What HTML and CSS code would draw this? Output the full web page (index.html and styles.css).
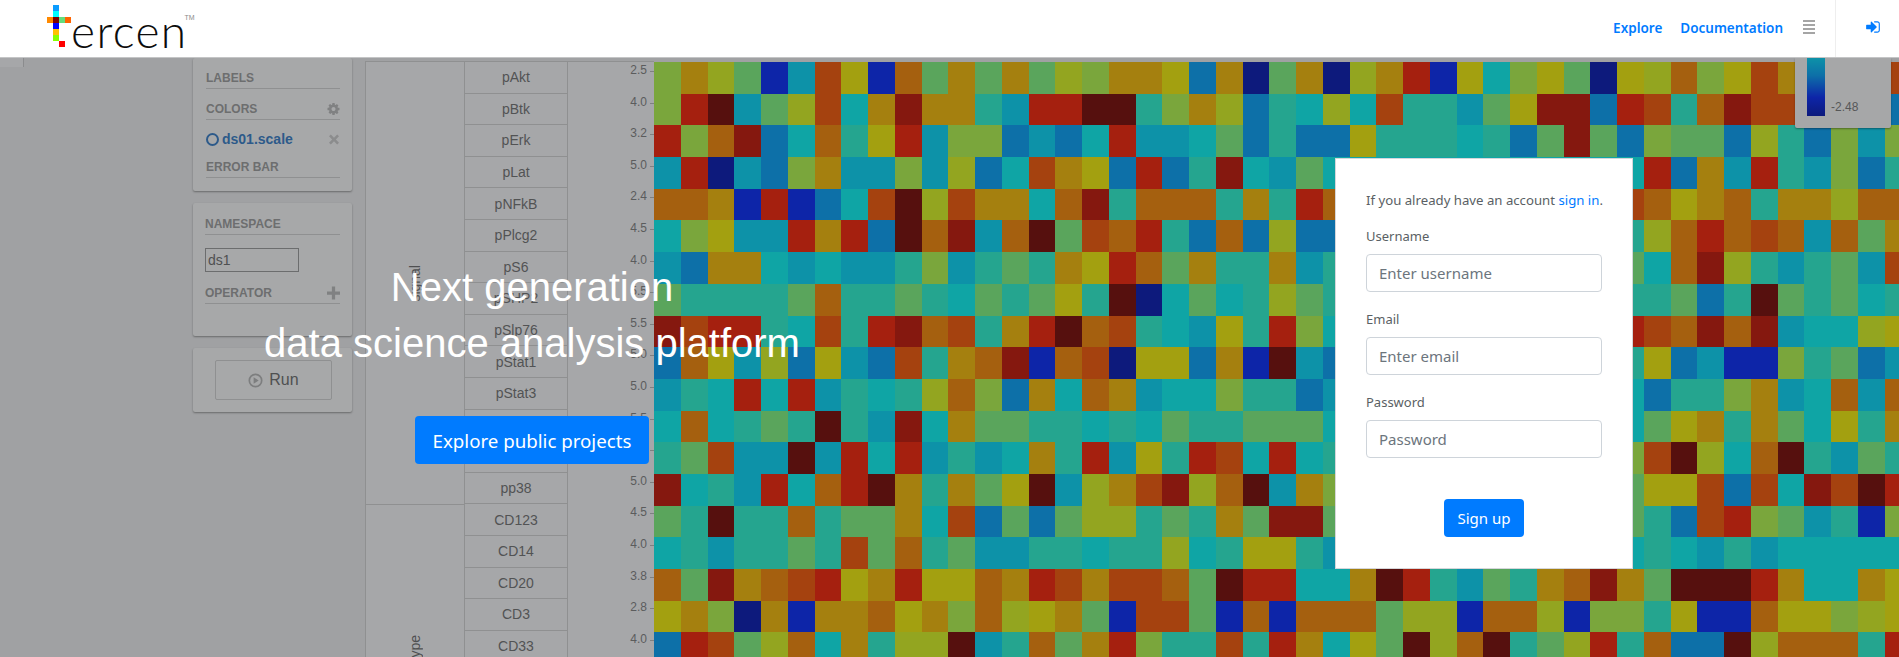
FILE: index.html
```html
<!DOCTYPE html>
<html lang="en">
<head>
<meta charset="utf-8">
<title>Tercen</title>
<link rel="stylesheet" href="styles.css">
</head>
<body>
<header class="nav">
  <a class="logo" href="#">
    <span class="logo-mark">
      <i class="px px-a"></i><i class="px px-b"></i>
      <span class="px-row"><i class="px px-c"></i><i class="px px-d"></i><i class="px px-e"></i><i class="px px-f"></i></span>
      <i class="px px-g"></i><i class="px px-h"></i><i class="px px-i"></i><i class="px px-j"></i>
    </span>
    <span class="logo-word">ercen</span><sup class="logo-tm">TM</sup>
  </a>
  <nav class="nav-links">
    <a href="#">Explore</a>
    <a href="#">Documentation</a>
    <span class="burger"><i></i><i></i><i></i><i></i></span>
    <span class="nav-sep"></span>
    <svg class="signin" viewBox="0 0 1536 1792"><path d="M1184 896q0 26-19 45l-544 544q-19 19-45 19t-45-19-19-45v-288h-448q-26 0-45-19t-19-45v-384q0-26 19-45t45-19h448v-288q0-26 19-45t45-19 45 19l544 544q19 19 19 45zm352-352v704q0 119-84.5 203.5t-203.5 84.5h-320q-13 0-22.5-9.5t-9.5-22.5q0-4-1-20t-.5-26.5 3-23.5 10-19.5 20.5-6.5h320q66 0 113-47t47-113v-704q0-66-47-113t-113-47h-312l-11.5-1-11.5-3-8-5.5-7-9-2-13.5q0-4-1-20t-.5-26.5 3-23.5 10-19.5 20.5-6.5h320q119 0 203.5 84.5t84.5 203.5z"/></svg>
  </nav>
</header>

<main class="app">
  <div class="gutter"><div class="gutter-box"></div></div>

  <aside class="cards">
    <section class="card card-top">
      <div class="field"><span>LABELS</span></div>
      <div class="field"><span>COLORS</span>
        <svg class="ico" viewBox="0 0 1536 1792"><path d="M1024 896q0-106-75-181t-181-75-181 75-75 181 75 181 181 75 181-75 75-181zm512-109v222q0 12-8 23t-20 13l-185 28q-19 54-39 91 35 50 107 138 10 12 10 25t-9 23q-27 37-99 108t-94 71q-12 0-26-9l-138-108q-44 23-91 38-16 136-29 186-7 28-36 28h-222q-14 0-24.5-8.5t-11.5-21.5l-28-184q-49-16-90-37l-141 107q-10 9-25 9-14 0-25-11-126-114-165-168-7-10-7-23 0-12 8-23 15-21 51-66.5t54-70.5q-27-50-41-99l-183-27q-13-2-21-12.5t-8-23.5v-222q0-12 8-23t19-13l186-28q14-46 39-92-40-57-107-138-10-12-10-24 0-10 9-23 26-36 98.5-107.5t94.5-71.5q13 0 26 10l138 107q44-23 91-38 16-136 29-186 7-28 36-28h222q14 0 24.5 8.5t11.5 21.5l28 184q49 16 90 37l142-107q9-9 24-9 13 0 25 10 129 119 165 170 7 8 7 22 0 12-8 23-15 21-51 66.5t-54 70.5q26 50 41 98l183 28q13 2 21 12.5t8 23.5z"/></svg>
      </div>
      <div class="chip"><i class="chip-dot"></i><span class="chip-name">ds01.scale</span>
        <svg class="ico ico-x" viewBox="0 0 12 12"><path d="M2.2 0 6 3.8 9.8 0 12 2.2 8.2 6 12 9.8 9.8 12 6 8.2 2.2 12 0 9.8 3.8 6 0 2.2z"/></svg>
      </div>
      <div class="field field-tight"><span>ERROR BAR</span></div>
    </section>

    <section class="card card-ns">
      <div class="field"><span>NAMESPACE</span></div>
      <input class="ns-input" type="text" value="ds1">
      <div class="field"><span>OPERATOR</span>
        <svg class="ico" viewBox="0 0 12 12"><path d="M4.5 0h3v4.5H12v3H7.5V12h-3V7.5H0v-3h4.5z"/></svg>
      </div>
    </section>

    <section class="card card-run">
      <button class="run" type="button">
        <svg class="run-ico" viewBox="0 0 16 16"><circle cx="8" cy="8" r="6.6" fill="none" stroke="#7d7e7f" stroke-width="1.8"/><path d="M6 4.6 11.4 8 6 11.4z" fill="#7d7e7f"/></svg>
        Run
      </button>
    </section>
  </aside>

  <section class="facets">
    <div class="groups">
      <div class="group group-a"><span class="vtext">signal</span></div>
      <div class="group group-b"><span class="vtext">Cell type</span></div>
    </div>
    <div class="rows">
      <div class="row">pAkt</div><div class="row">pBtk</div><div class="row">pErk</div><div class="row">pLat</div>
      <div class="row">pNFkB</div><div class="row">pPlcg2</div><div class="row">pS6</div><div class="row">pSHP2</div>
      <div class="row">pSlp76</div><div class="row">pStat1</div><div class="row">pStat3</div><div class="row">pStat5</div>
      <div class="row">pZap70</div><div class="row">pp38</div><div class="row">CD123</div><div class="row">CD14</div>
      <div class="row">CD20</div><div class="row">CD3</div><div class="row">CD33</div>
    </div>
    <div class="scale">
      <div class="scale-title"><span class="vtext">ds01.scale</span></div>
      <div class="scale-values">
        <div class="val">2.5</div><div class="val">4.0</div><div class="val">3.2</div><div class="val">5.0</div>
        <div class="val">2.4</div><div class="val">4.5</div><div class="val">4.0</div><div class="val">5.5</div>
        <div class="val">5.5</div><div class="val">5.0</div><div class="val">5.0</div><div class="val">5.5</div>
        <div class="val">5.0</div><div class="val">5.0</div><div class="val">4.5</div><div class="val">4.0</div>
        <div class="val">3.8</div><div class="val">2.8</div><div class="val">4.0</div>
      </div>
    </div>
  </section>

  <div class="heat" id="heat"></div>

  <div class="legend">
    <div class="legend-bar"></div>
    <span class="legend-min">-2.48</span>
  </div>

  <div class="hero">
    <h1 class="hero-title">Next generation<br>data science analysis platform</h1>
    <a class="hero-btn" href="#">Explore public projects</a>
  </div>

  <form class="signup">
    <p class="signup-note">If you already have an account <a href="#">sign in</a>.</p>
    <label class="lbl lbl-first" for="u">Username</label>
    <input class="inp" id="u" type="text" placeholder="Enter username">
    <label class="lbl" for="e">Email</label>
    <input class="inp" id="e" type="text" placeholder="Enter email">
    <label class="lbl" for="p">Password</label>
    <input class="inp" id="p" type="password" placeholder="Password">
    <button class="signup-btn" type="button">Sign up</button>
  </form>
</main>
<script src="heat.js"></script>
</body>
</html>
```
FILE: styles.css
```css
* { box-sizing: border-box; }
html, body { margin: 0; height: 100%; overflow: hidden; }
body {
  font-family: "Liberation Sans", Arial, sans-serif;
  background: #a0a1a3;
  color: #555;
  display: flex;
  flex-direction: column;
}
a { text-decoration: none; }

/* Top bar */
.nav {
  height: 58px;
  flex: none;
  background: #fff;
  border-bottom: 1px solid #c4c5c6;
  display: flex;
  justify-content: space-between;
  position: relative;
  z-index: 5;
}
.logo { display: flex; align-items: flex-start; margin-left: 47px; color: #111; }
.logo-mark { width: 24px; height: 42px; margin-top: 5px; display: flex; flex-direction: column; align-items: flex-start; }
.px { display: block; width: 6px; height: 6px; margin-left: 6px; flex: none; }
.px-row { display: flex; }
.px-row .px { margin-left: 0; }
.px-a { background: #0a9cff; }
.px-b { background: #00ffff; }
.px-c { background: #ff8a00; }
.px-d { background: #7d0000; }
.px-e { background: #63dd7c; }
.px-f { background: #ff6400; }
.px-g { background: #0000ff; }
.px-h { background: #ffc000; }
.px-i { background: #88ff00; }
.px-j { background: #ff0000; margin-left: 12px; }
.logo-word {
  font-family: Lato, sans-serif;
  font-weight: 300;
  font-size: 46px;
  line-height: 46px;
  margin-left: 0;
  margin-top: 8px;
  letter-spacing: 1.4px;
  color: #0c0c0c;
}
.logo-tm { font-size: 7px; line-height: 8px; margin-top: 14px; margin-left: -3px; color: #8b8b8b; }
.nav-links {
  display: flex;
  align-items: center;
  font-family: "Noto Sans", sans-serif;
  font-weight: 600;
  font-size: 13.5px;
  padding-bottom: 1px;
  padding-right: 19px;
  height: 57px;
}
.nav-links a { color: #007bff; margin-right: 18px; }
.burger { display: flex; flex-direction: column; gap: 2px; width: 12px; margin-left: 2px; margin-top: -2px; }
.burger i { display: block; height: 2px; background: #a5a5a5; }
.nav-sep { width: 1px; height: 57px; background: #eee; margin-left: 20px; margin-right: 30px; margin-bottom: -1px; }
.signin { width: 14px; height: 16px; fill: #007bff; margin-top: -2px; }

/* App underneath the overlay */
.app {
  position: relative;
  flex: 1;
  min-height: 0;
  display: flex;
  align-items: flex-start;
  overflow: hidden;
}
.gutter { width: 193px; flex: none; }
.gutter-box { width: 24px; height: 9px; background: #a6a7a9; border-right: 1px solid #8b8c8e; }

.cards { width: 159px; flex: none; display: flex; flex-direction: column; gap: 12px; }
.card { background: #a7a8a9; border-radius: 2px; box-shadow: 0 1px 2px rgba(0, 0, 0, .35); padding: 0 12px 0 13px; }
.card-top { height: 133px; padding-top: 10px; }
.card-ns { height: 133px; padding: 11px 12px; }
.card-run { height: 64px; padding: 12px 20px 0 22px; }
.field {
  display: flex;
  justify-content: space-between;
  align-items: center;
  height: 21px;
  font-size: 12px;
  font-weight: 700;
  color: #6d6e6f;
  border-bottom: 1px solid #8f9091;
  margin-bottom: 10px;
}
.ico { width: 13px; height: 14px; fill: #808182; }
.ico-x { width: 10px; height: 11px; fill: #8b8c8d; margin-left: auto; margin-right: 1px; }
.chip { display: flex; align-items: center; height: 20px; margin: -1px 0 8px; }
.chip-dot { width: 13px; height: 13px; border: 2px solid #2d5a8a; border-radius: 50%; margin-right: 3px; }
.chip-name { font-size: 14px; font-weight: 700; color: #2d5a8a; }
.field-tight { margin-top: 0; }
.ns-input {
  display: block;
  width: 94px;
  height: 24px;
  padding: 0 2px;
  margin: 13px 0 11px;
  background: transparent;
  border: 1px solid #6c6d6e;
  border-radius: 0;
  font-family: inherit;
  font-size: 14px;
  color: #4f5051;
}
.run {
  width: 117px;
  height: 40px;
  background: transparent;
  border: 1px solid #8f9091;
  border-radius: 2px;
  font-family: inherit;
  font-size: 16px;
  color: #4f5051;
  display: flex;
  align-items: center;
  justify-content: center;
  gap: 6px;
}
.run-ico { width: 15px; height: 15px; }

.facets {
  width: 289px;
  margin-left: 13px;
  flex: none;
  display: flex;
  margin-top: 3px;
  background: #a6a7a9;
  border-top: 1px solid #8f9091;
  border-left: 1px solid #8f9091;
  height: 700px;
}
.groups { width: 99px; flex: none; border-right: 1px solid #8f9091; }
.group { display: flex; align-items: center; justify-content: center; color: #4f5051; }
.group-a { height: 443px; border-bottom: 1px solid #8f9091; }
.group-b { height: 315px; }
.vtext { writing-mode: vertical-rl; transform: rotate(180deg); font-size: 14px; color: #4f5051; white-space: nowrap; }
.rows { width: 103px; flex: none; border-right: 1px solid #8f9091; }
.row {
  height: 31.6px;
  border-bottom: 1px solid #8f9091;
  display: flex;
  align-items: center;
  justify-content: center;
  font-size: 14px;
  color: #525354;
}
.scale { flex: 1; display: flex; min-width: 0; }
.scale-title { width: 30px; padding-top: 332px; display: flex; justify-content: center; }
.scale-values { flex: 1; }
.val {
  height: 31.6px;
  display: flex;
  justify-content: flex-end;
  font-size: 12px;
  line-height: 16px;
  color: #5b5c5d;
}
.val::after { content: ""; width: 4px; height: 1px; margin: 9px 0 0 3px; background: #7f8081; }

.heat {
  flex: 1;
  min-width: 0;
  margin-top: 4px;
  display: grid;
  grid-template-columns: repeat(47, 26.76px);
  grid-auto-rows: 31.7px;
}
.c-N { background: #0d1a7c; }
.c-B { background: #0d25a8; }
.c-L { background: #0d70a8; }
.c-C { background: #0d92a8; }
.c-T { background: #0fa5a5; }
.c-G { background: #25a58f; }
.c-E { background: #5aa55c; }
.c-O { background: #7aa63c; }
.c-P { background: #93a520; }
.c-Y { background: #a3a010; }
.c-A { background: #a5800f; }
.c-R { background: #a5600f; }
.c-S { background: #a5420f; }
.c-D { background: #a5200f; }
.c-M { background: #85180f; }
.c-K { background: #56100e; }

.legend {
  position: absolute;
  top: 0;
  left: 1795px;
  width: 96px;
  height: 70px;
  background: #a6a7a8;
  box-shadow: 0 1px 2px rgba(0, 0, 0, .35);
  border-radius: 0 0 2px 2px;
  padding-left: 12px;
  display: flex;
}
.legend-bar { width: 18px; height: 58px; background: linear-gradient(#0d92a8 0%, #0d70a8 30%, #0d25a8 68%, #0d1a7c 100%); }
.legend-min { font-size: 12px; line-height: 14px; color: #565758; margin: 42px 0 0 6px; }

/* Overlay content */
.hero {
  position: absolute;
  left: 232px;
  top: 201px;
  width: 600px;
  display: flex;
  flex-direction: column;
  align-items: center;
  text-align: center;
}
.hero-title {
  margin: 0;
  font-weight: 400;
  font-size: 40px;
  line-height: 56px;
  color: #fff;
}
.hero-btn {
  margin-top: 45px;
  width: 234px;
  height: 48px;
  display: flex;
  align-items: center;
  justify-content: center;
  background: #007bff;
  border-radius: 4px;
  color: #fff;
  font-family: "Noto Sans", sans-serif;
  font-size: 18.7px;
}
.signup {
  position: absolute;
  left: 1335px;
  top: 100px;
  width: 298px;
  height: 411px;
  background: #fff;
  border: 1px solid #d5d6da;
  padding: 32px 30px 0;
  display: flex;
  flex-direction: column;
  font-family: "Noto Sans", sans-serif;
  font-size: 13px;
  color: #5a5f64;
}
.signup-note { margin: 0; line-height: 18px; white-space: nowrap; font-size: 13.2px; }
.signup-note a { color: #007bff; }
.lbl { line-height: 18px; margin-top: 18px; margin-bottom: 9px; display: block; }
.lbl-first { margin-top: 18px; }
.inp {
  height: 38px;
  width: 100%;
  padding: 0 12px;
  border: 1px solid #ced4da;
  border-radius: 4px;
  font-family: inherit;
  font-size: 15px;
  color: #495057;
  background: #fff;
}
.inp::placeholder { color: #6c757d; opacity: 1; }
.signup-btn {
  align-self: center;
  margin-top: 41px;
  width: 80px;
  height: 38px;
  border: 0;
  border-radius: 4px;
  background: #007bff;
  color: #fff;
  font-family: inherit;
  font-size: 15px;
}
```
FILE: heat.js
```js
var H = "TTTTTTTTTT";
var rows = [
  "OAPEBCSYBREAEAEPOAAYLANE" + "ANPADBYTOYENYPROYSATTTS",
  "ODKCEPSTAMAAGCDDKKGOAPLG" + "TPTSGGCEYMMLDSGRMSSTTTL",
  "DORMLTRGYDCOOLCLTDCCTELG" + "LLYGGGTGLEMELOEELPGLOCO",
  "CDNCLOACCOCPLTSAYLDLGMTC" + "ET" + H + "TDLACDGCOLG",
  "RRABDBLTSKPSAATRMGRRRGAG" + "DR" + H + "SRYARGAAPRR",
  "TOYCCDADLKRMCRKESRDGLRLP" + "LL" + H + "GPRDRSRCREA",
  "CLAATCTCCGOCGEGAYDREAGGA" + "CG" + H + "ETRMPGCGECS",
  "EGGGGERGGEGTEGEYGKNTETGP" + "EG" + H + "GGELGKEGETG",
  "MSDDGTSGDMRSGADKRSGTCYGD" + "OT" + H + "DSRMRMCTTPY",
  "LRYCPLYCLSGARMBRSNYYLABK" + "CL" + H + "GYLCBBOGELC",
  "CGTDTDCGTGPROLATRACTTOGG" + "LC" + H + "TLGGOACTRCR",
  "TRTGEGKGCMTAEEGGTGTEGGEE" + "ET" + H + "TEYAGAETYGA",
  "GESCCKCDTDCGCTAGDCYGDSTD" + "TG" + H + "OSKPTRKGCEG",
  "MTGCDTRDKAGAEYKCPASMPRKC" + "AO" + H + "EYYSLSTMSKD",
  "EGKGGRGEEATSLELEPPGEGAEM" + "ME" + H + "EGLSDOECGBO",
  "TGCGGEGSERGECCGGTGGPTGYY" + "GC" + H + "TGTCGCTTTTT",
  "REMARSDYADYYRADSASSREKDD" + "TTAKDGCEGARMAEKKKDATTAY",
  "YAONABAARYAORPYAEBSSEBRB" + "RRREPPBRRPBOOGYBBRYYOPY",
  "LDSEPRTAGPPKCGREADOGGSGD" + "ATYEKPRKGEPDGRLLKPRRRGD"
];
var heat = document.getElementById("heat");
rows.forEach(function (row) {
  row.split("").forEach(function (code) {
    var cell = document.createElement("div");
    cell.className = "c-" + code;
    heat.appendChild(cell);
  });
});
```
